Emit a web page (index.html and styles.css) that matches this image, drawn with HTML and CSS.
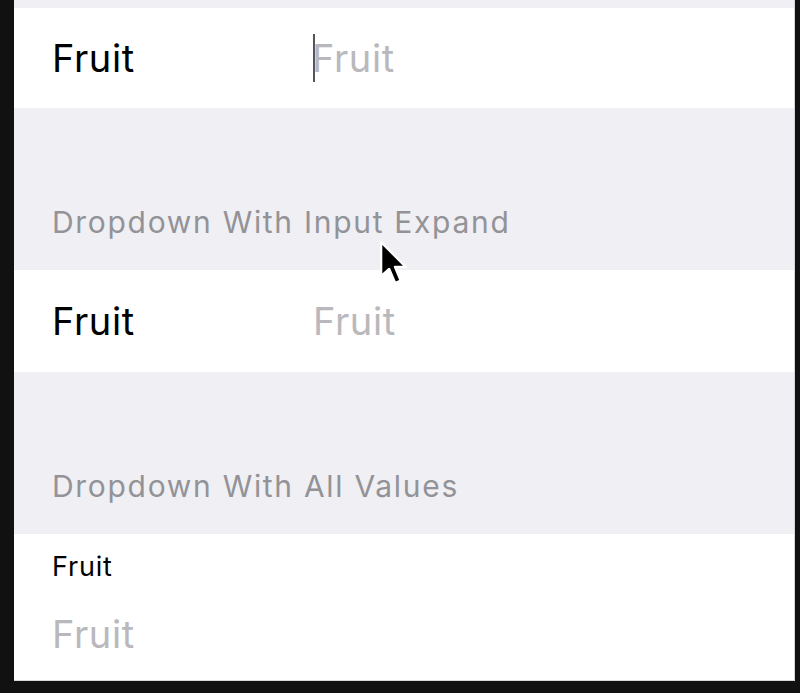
FILE: index.html
```html
<!DOCTYPE html>
<html lang="en">
<head>
  <meta charset="UTF-8">
  <link rel="stylesheet" href="styles.css">
</head>
<body>
<div class="screen">
    <div class="band band-top"></div>

    <div class="row">
        <p class="row-label">Fruit</p>
        <div class="row-input"><span class="caret"></span><span class="placeholder">Fruit</span></div>
    </div>

    <div class="band band-header">
        <p class="header-text">Dropdown With Input Expand</p>
    </div>

    <div class="row row-tall">
        <p class="row-label">Fruit</p>
        <div class="row-input"><span class="placeholder">Fruit</span></div>
    </div>

    <div class="band band-header">
        <p class="header-text">Dropdown With All Values</p>
    </div>

    <div class="row row-stacked">
        <p class="row-label small">Fruit</p>
        <div class="row-input"><span class="placeholder">Fruit</span></div>
    </div>

    <svg class="pointer" width="34" height="49" viewBox="0 0 16 23">
        <path d="M1 1 L1 17 L4.8 13.6 L7.6 20.2 L10.2 19.1 L7.5 12.6 L12.6 12.6 Z" fill="#000" stroke="#fff" stroke-width="1.1" stroke-linejoin="round"/>
    </svg>
</div>
</body>
</html>
```

FILE: styles.css
```css
body {
    margin: 0;
    padding: 0;
    background-color: #111;
    font-family: Inter, 'Open Sans', sans-serif;
}
p {
    margin: 0;
}
.screen {
    position: relative;
    margin-left: 14px;
    width: 781px;
    height: 681px;
    background-color: #efeff4;
    border-right: 1px solid #d5d5da;
    border-bottom: 1px solid #d5d5da;
    box-sizing: border-box;
}
.band-top {
    height: 8px;
}
.band-header {
    height: 162px;
    display: flex;
    align-items: flex-end;
    padding: 0 0 30px 38px;
    box-sizing: border-box;
}
.header-text {
    font-size: 30px;
    line-height: 36px;
    color: #939397;
    letter-spacing: 1.7px;
}
.row {
    background-color: #fff;
    height: 100px;
    display: flex;
    align-items: center;
    padding-left: 38px;
}
.row-tall {
    height: 102px;
}
.row-label {
    width: 261px;
    font-size: 38px;
    line-height: 46px;
    color: #000;
    letter-spacing: 0.6px;
}
.row-input {
    display: flex;
    align-items: center;
    font-size: 38px;
    line-height: 46px;
    letter-spacing: 0.6px;
}
.placeholder {
    color: #b9b9bd;
}
.caret {
    width: 2px;
    height: 48px;
    background-color: #555;
    margin-right: -3px;
}
.row-stacked {
    height: 146px;
    flex-direction: column;
    align-items: flex-start;
    justify-content: center;
    gap: 29px;
    padding-bottom: 5px;
    box-sizing: border-box;
}
.row-label.small {
    font-size: 27px;
    line-height: 30px;
    width: auto;
    letter-spacing: 0.8px;
}
.pointer {
    position: absolute;
    left: 365px;
    top: 240px;
}
```
